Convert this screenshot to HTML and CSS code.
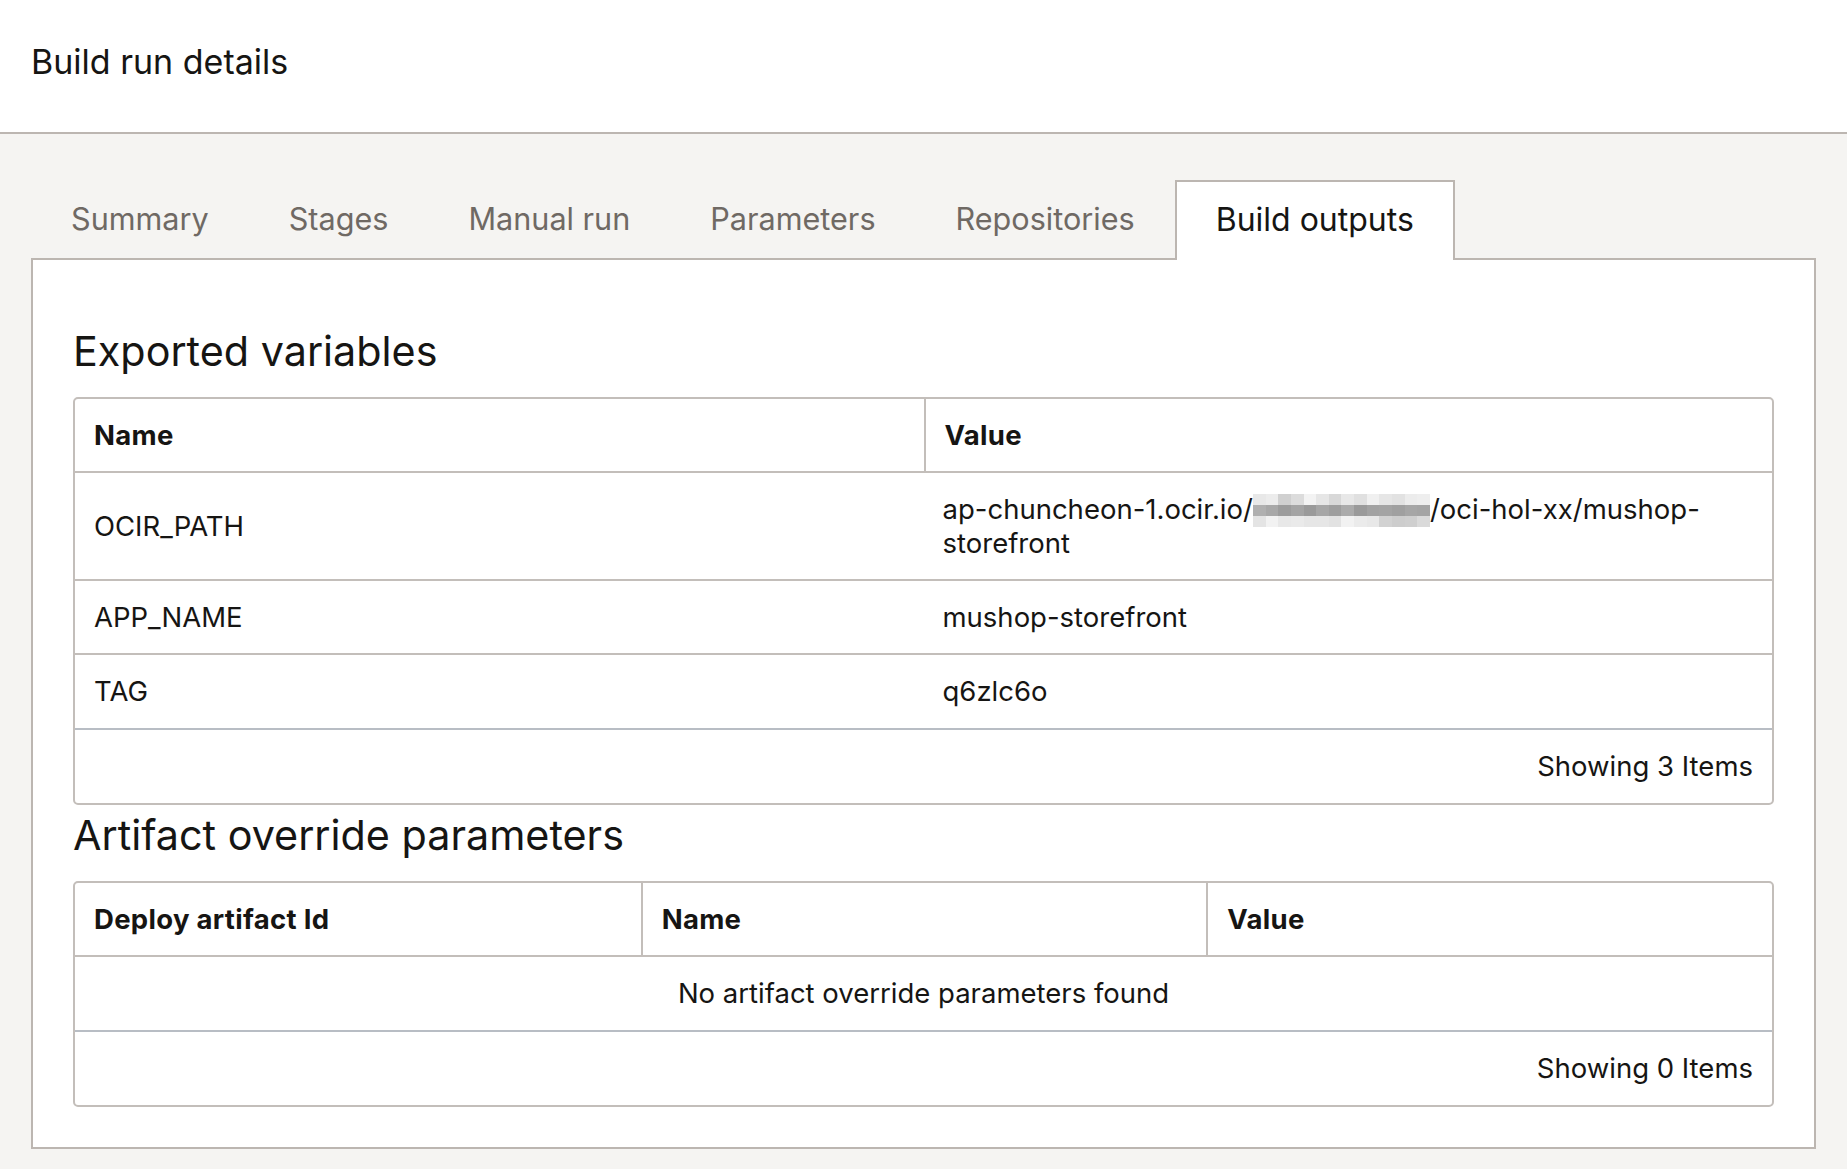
FILE: index.html
```html
<!DOCTYPE html>
<html lang="en">
<head>
<meta charset="utf-8">
<title>Build run details</title>
<link rel="stylesheet" href="styles.css">
</head>
<body>
<header class="page-header">
  <h1 class="page-title">Build run details</h1>
</header>
<main class="content">
  <nav class="tabs">
    <a class="tab">Summary</a>
    <a class="tab">Stages</a>
    <a class="tab">Manual run</a>
    <a class="tab">Parameters</a>
    <a class="tab">Repositories</a>
    <a class="tab tab-active">Build outputs</a>
  </nav>
  <section class="panel">
    <h2 class="section-title">Exported variables</h2>
    <div class="data-table">
      <table class="grid">
        <thead>
          <tr><th>Name</th><th>Value</th></tr>
        </thead>
        <tbody>
          <tr><td>OCIR_PATH</td><td>ap-chuncheon-1.ocir.io/<span class="redacted"><span class="mos mos-a"></span><span class="mos mos-b"></span><span class="mos mos-c"></span></span>/oci-hol-xx/mushop-storefront</td></tr>
          <tr><td>APP_NAME</td><td>mushop-storefront</td></tr>
          <tr class="last-row"><td>TAG</td><td>q6zlc6o</td></tr>
        </tbody>
      </table>
      <div class="table-footer">Showing 3 Items</div>
    </div>
    <h2 class="section-title">Artifact override parameters</h2>
    <div class="data-table">
      <table class="grid">
        <thead>
          <tr><th>Deploy artifact Id</th><th>Name</th><th>Value</th></tr>
        </thead>
        <tbody>
          <tr class="last-row"><td class="empty" colspan="3">No artifact override parameters found</td></tr>
        </tbody>
      </table>
      <div class="table-footer">Showing 0 Items</div>
    </div>
  </section>
</main>
</body>
</html>
```

FILE: styles.css
```css
* { box-sizing: border-box; }

html, body {
  margin: 0;
  padding: 0;
}

body {
  background: #f5f4f2;
  color: #161513;
  font-family: Inter, "Liberation Sans", Arial, sans-serif;
}

.page-header {
  background: #ffffff;
  height: 134px;
  border-bottom: 2px solid #bcb6b1;
  padding: 40px 31px 0;
}

.page-title {
  margin: 0;
  font-size: 34px;
  font-weight: 400;
  line-height: 44px;
  color: #161513;
}

.content {
  padding: 46px 31px 20px;
}

.tabs {
  display: flex;
  height: 78px;
  position: relative;
  z-index: 1;
}

.tab {
  display: flex;
  align-items: center;
  padding: 0 38px 5px;
  font-size: 30.6px;
  color: #6f6964;
  border: 2px solid transparent;
  border-bottom: none;
  height: 80px;
}

.tab-active {
  background: #ffffff;
  color: #161513;
  border-color: #bcb6b1;
  font-size: 32px;
  padding: 0 39px 3px;
}

.panel {
  background: #ffffff;
  border: 2px solid #bcb6b1;
  padding: 61px 40px 40px;
}

.section-title {
  margin: 4px 0 20px;
  font-size: 41.3px;
  font-weight: 400;
  line-height: 52px;
  color: #161513;
}

.data-table {
  border: 2px solid #c3beba;
  border-radius: 5px;
  overflow: hidden;
}

.grid {
  width: 100%;
  border-collapse: separate;
  border-spacing: 0;
  table-layout: fixed;
  font-size: 27.5px;
  line-height: 33px;
}

.grid th,
.grid td {
  text-align: left;
  padding: 20px 19px 19px;
  border-bottom: 2px solid #c3beba;
  vertical-align: middle;
}

.grid th {
  font-weight: 700;
  letter-spacing: 0.3px;
}

.grid th + th {
  border-left: 2px solid #c3beba;
}

.grid .last-row td {
  border-bottom-color: #b8bdc4;
  padding-bottom: 20px;
}

.grid td.empty {
  text-align: center;
}

.table-footer {
  text-align: right;
  padding: 20px 19px 20px;
  font-size: 27.5px;
  line-height: 33px;
}

.redacted {
  display: inline-flex;
  flex-direction: column;
  width: 177px;
  height: 33px;
  vertical-align: top;
  margin-top: 1px;
}

.mos {
  flex: 1;
  display: block;
}

.mos-a {
  background: linear-gradient(90deg,
    #e8e8e8 0 7.14%, #ececec 7.14% 14.28%, #d0d0d0 14.28% 21.42%, #dcdcdc 21.42% 28.56%,
    #f3f3f3 28.56% 35.7%, #e6e6e6 35.7% 42.84%, #d8d8d8 42.84% 49.98%, #e8e8e8 49.98% 57.12%,
    #e0e0e0 57.12% 64.26%, #f0f0f0 64.26% 71.4%, #e6e6e6 71.4% 78.54%, #e2e2e2 78.54% 85.68%,
    #ececec 85.68% 92.82%, #eeeeee 92.82% 100%);
}

.mos-b {
  background: linear-gradient(90deg,
    #b0b0b0 0 7.14%, #a8a8a8 7.14% 14.28%, #9c9c9c 14.28% 21.42%, #a4a4a4 21.42% 28.56%,
    #9a9a9a 28.56% 35.7%, #a6a6a6 35.7% 42.84%, #9e9e9e 42.84% 49.98%, #ababab 49.98% 57.12%,
    #9a9a9a 57.12% 64.26%, #a2a2a2 64.26% 71.4%, #a4a4a4 71.4% 78.54%, #a0a0a0 78.54% 85.68%,
    #a6a6a6 85.68% 92.82%, #a4a4a4 92.82% 100%);
}

.mos-c {
  background: linear-gradient(90deg,
    #e4e4e4 0 7.14%, #f2f2f2 7.14% 14.28%, #e8e8e8 14.28% 21.42%, #eaeaea 21.42% 28.56%,
    #e6e6e6 28.56% 35.7%, #e6e6e6 35.7% 42.84%, #e2e2e2 42.84% 49.98%, #f2f2f2 49.98% 57.12%,
    #ebebeb 57.12% 64.26%, #e8e8e8 64.26% 71.4%, #d2d2d2 71.4% 78.54%, #cdcdcd 78.54% 85.68%,
    #cfcfcf 85.68% 92.82%, #dadada 92.82% 100%);
}
```
